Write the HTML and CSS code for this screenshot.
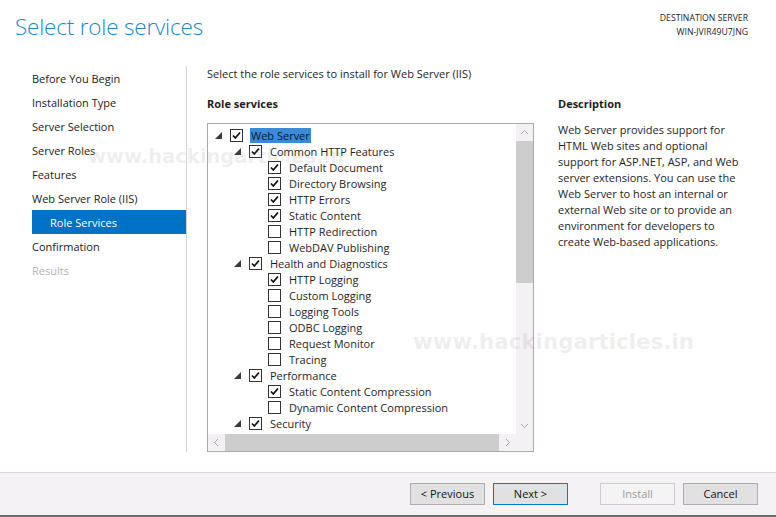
FILE: index.html
```html
<!DOCTYPE html>
<html>
<head>
<meta charset="utf-8">
<link rel="stylesheet" href="styles.css">
</head>
<body>
<svg class="defs" width="0" height="0">
  <symbol id="chk" viewBox="0 0 11 11"><polyline points="2,5.5 4.3,8 9,2.5" fill="none" stroke="#111" stroke-width="1.8"/></symbol>
  <symbol id="tri" viewBox="0 0 7 7"><polygon points="7,0 7,7 0,7" fill="#3a3a3a"/></symbol>
</svg>
<div class="app">
  <header class="header">
    <h1 class="title">Select role services</h1>
    <div class="dest">
      <div>DESTINATION SERVER</div>
      <div>WIN-JVIR49U7JNG</div>
    </div>
  </header>
  <main class="main">
    <nav class="nav">
      <div class="nav-item">Before You Begin</div>
      <div class="nav-item">Installation Type</div>
      <div class="nav-item">Server Selection</div>
      <div class="nav-item">Server Roles</div>
      <div class="nav-item">Features</div>
      <div class="nav-item">Web Server Role (IIS)</div>
      <div class="nav-item active">Role Services</div>
      <div class="nav-item">Confirmation</div>
      <div class="nav-item disabled">Results</div>
    </nav>
    <section class="content">
      <div class="intro">Select the role services to install for Web Server (IIS)</div>
      <div class="cols">
        <div class="tree-col">
          <div class="heading">Role services</div>
          <div class="tree">
            <div class="tree-view">
              <div class="row l0"><span class="exp"><svg><use href="#tri"/></svg></span><span class="cb on"><svg><use href="#chk"/></svg></span><span class="lbl sel">Web Server</span></div>
              <div class="row l1"><span class="exp"><svg><use href="#tri"/></svg></span><span class="cb on"><svg><use href="#chk"/></svg></span><span class="lbl">Common HTTP Features</span></div>
              <div class="row l2"><span class="exp"></span><span class="cb on"><svg><use href="#chk"/></svg></span><span class="lbl">Default Document</span></div>
              <div class="row l2"><span class="exp"></span><span class="cb on"><svg><use href="#chk"/></svg></span><span class="lbl">Directory Browsing</span></div>
              <div class="row l2"><span class="exp"></span><span class="cb on"><svg><use href="#chk"/></svg></span><span class="lbl">HTTP Errors</span></div>
              <div class="row l2"><span class="exp"></span><span class="cb on"><svg><use href="#chk"/></svg></span><span class="lbl">Static Content</span></div>
              <div class="row l2"><span class="exp"></span><span class="cb"></span><span class="lbl">HTTP Redirection</span></div>
              <div class="row l2"><span class="exp"></span><span class="cb"></span><span class="lbl">WebDAV Publishing</span></div>
              <div class="row l1"><span class="exp"><svg><use href="#tri"/></svg></span><span class="cb on"><svg><use href="#chk"/></svg></span><span class="lbl">Health and Diagnostics</span></div>
              <div class="row l2"><span class="exp"></span><span class="cb on"><svg><use href="#chk"/></svg></span><span class="lbl">HTTP Logging</span></div>
              <div class="row l2"><span class="exp"></span><span class="cb"></span><span class="lbl">Custom Logging</span></div>
              <div class="row l2"><span class="exp"></span><span class="cb"></span><span class="lbl">Logging Tools</span></div>
              <div class="row l2"><span class="exp"></span><span class="cb"></span><span class="lbl">ODBC Logging</span></div>
              <div class="row l2"><span class="exp"></span><span class="cb"></span><span class="lbl">Request Monitor</span></div>
              <div class="row l2"><span class="exp"></span><span class="cb"></span><span class="lbl">Tracing</span></div>
              <div class="row l1"><span class="exp"><svg><use href="#tri"/></svg></span><span class="cb on"><svg><use href="#chk"/></svg></span><span class="lbl">Performance</span></div>
              <div class="row l2"><span class="exp"></span><span class="cb on"><svg><use href="#chk"/></svg></span><span class="lbl">Static Content Compression</span></div>
              <div class="row l2"><span class="exp"></span><span class="cb"></span><span class="lbl">Dynamic Content Compression</span></div>
              <div class="row l1"><span class="exp"><svg><use href="#tri"/></svg></span><span class="cb on"><svg><use href="#chk"/></svg></span><span class="lbl">Security</span></div>
            </div>
            <div class="vscroll">
              <div class="sb-btn"><svg viewBox="0 0 17 17"><polyline points="5,10 8.5,6.5 12,10" fill="none" stroke="#a6a6a6" stroke-width="1"/></svg></div>
              <div class="vthumb"></div>
              <div class="vtrack"></div>
              <div class="sb-btn"><svg viewBox="0 0 17 17"><polyline points="5,7 8.5,10.5 12,7" fill="none" stroke="#a6a6a6" stroke-width="1"/></svg></div>
            </div>
            <div class="hscroll">
              <div class="sb-btn"><svg viewBox="0 0 17 17"><polyline points="10,5 6.5,8.5 10,12" fill="none" stroke="#a6a6a6" stroke-width="1"/></svg></div>
              <div class="hthumb"></div>
              <div class="sb-btn"><svg viewBox="0 0 17 17"><polyline points="7,5 10.5,8.5 7,12" fill="none" stroke="#a6a6a6" stroke-width="1"/></svg></div>
            </div>
            <div class="corner"></div>
          </div>
        </div>
        <div class="desc-col">
          <div class="heading">Description</div>
          <p class="desc">Web Server provides support for<br>HTML Web sites and optional<br>support for ASP.NET, ASP, and Web<br>server extensions. You can use the<br>Web Server to host an internal or<br>external Web site or to provide an<br>environment for developers to<br>create Web-based applications.</p>
        </div>
      </div>
    </section>
  </main>
  <footer class="footer">
    <button class="btn">&lt; Previous</button>
    <button class="btn primary">Next &gt;</button>
    <button class="btn disabled install">Install</button>
    <button class="btn">Cancel</button>
  </footer>
  <div class="wm wm1">www.hackingarticles.in</div>
  <div class="wm wm2">www.hackingarticles.in</div>
</div>
</body>
</html>
```

FILE: styles.css
```css
* { box-sizing: border-box; }
html, body { margin: 0; padding: 0; }
body {
  width: 776px;
  height: 517px;
  overflow: hidden;
  background: #fff;
  font-family: "Open Sans", "Noto Sans", sans-serif;
  font-size: 11px;
  color: #1e1e1e;
}
.defs { position: absolute; }
.app {
  position: relative;
  width: 776px;
  height: 517px;
  display: flex;
  flex-direction: column;
}
.header {
  height: 62px;
  display: flex;
  justify-content: space-between;
  align-items: flex-start;
  padding: 0 28px 0 15px;
}
.title {
  margin: 12px 0 0;
  font-family: "Open Sans", sans-serif;
  font-weight: 300;
  font-size: 22.5px;
  letter-spacing: -0.2px;
  line-height: 30px;
  color: #1d86c4;
}
.dest {
  margin-top: 12px;
  text-align: right;
  font-size: 8.7px;
  line-height: 13.5px;
  color: #1e1e1e;
}
.main {
  flex: 1;
  display: flex;
  min-height: 0;
}
.nav {
  width: 187px;
  margin: 4px 0 20px;
  padding-left: 32px;
  border-right: 1px solid #d4d4d4;
}
.nav-item {
  height: 24px;
  line-height: 26px;
  color: #222;
}
.nav-item.active {
  background: #0072c6;
  color: #fff;
  padding-left: 18px;
}
.nav-item.disabled { color: #b4b4b4; }
.content {
  padding: 3px 0 0 20px;
}
.intro { line-height: 17px; }
.cols {
  display: flex;
  gap: 24px;
  margin-top: 14px;
}
.heading {
  font-weight: 700;
  line-height: 16px;
}
.tree-col { width: 327px; }
.tree {
  margin-top: 11px;
  width: 327px;
  height: 329px;
  border: 1px solid #aaaaaa;
  display: grid;
  grid-template-columns: 1fr 17px;
  grid-template-rows: 1fr 17px;
}
.tree-view {
  overflow: hidden;
  padding-top: 3px;
}
.row {
  height: 16px;
  display: flex;
  align-items: center;
  white-space: nowrap;
}
.row.l0 { padding-left: 3px; }
.row.l1 { padding-left: 22px; }
.row.l2 { padding-left: 41px; }
.exp {
  width: 19px;
  height: 16px;
  display: flex;
  align-items: center;
  padding-left: 4px;
  flex: none;
}
.exp svg { width: 7px; height: 7px; }
.cb {
  width: 13px;
  height: 13px;
  border: 1px solid #333;
  background: #fff;
  flex: none;
  display: flex;
}
.cb svg { width: 11px; height: 11px; }
.lbl {
  margin-left: 7px;
  padding: 0 1px;
  line-height: 15px;
}
.lbl.sel {
  background: #3b8ad8;
  color: #0b1530;
}
.vscroll {
  display: flex;
  flex-direction: column;
  background: #f4f1f4;
}
.sb-btn { width: 17px; height: 17px; flex: none; }
.sb-btn svg { width: 17px; height: 17px; display: block; }
.vthumb { height: 142px; background: #cdcdcd; flex: none; }
.vtrack { flex: 1; }
.hscroll {
  display: flex;
  background: #f4f1f4;
}
.hthumb { flex: 1; background: #cdcdcd; }
.corner { background: #f4f1f4; }
.desc-col { width: 200px; }
.desc {
  margin: 10px 0 0;
  line-height: 16px;
}
.footer {
  height: 45px;
  border-top: 1px solid #d9d9d9;
  border-bottom: 2px solid #6b6b6b;
  background: #f5f2f5;
  display: flex;
  align-items: flex-start;
  justify-content: flex-end;
  padding: 10px 18px 0 0;
  gap: 8px;
}
.btn {
  width: 75px;
  height: 22px;
  border: 1px solid #adadad;
  background: #e1e1e1;
  font-family: "Open Sans", sans-serif;
  font-size: 11px;
  color: #111;
  padding: 0;
  line-height: 20px;
}
.btn.primary { border-color: #0078d7; }
.btn.disabled {
  border-color: #cccccc;
  background: #f4f4f4;
  color: #9a9a9a;
}
.btn.install { margin-left: 24px; }
.wm {
  position: absolute;
  font-family: "DejaVu Sans", sans-serif;
  font-weight: 700;
  color: rgba(120, 120, 120, 0.12);
  pointer-events: none;
  white-space: nowrap;
}
.wm1 { left: 88px; top: 145px; font-size: 19.5px; }
.wm2 { left: 413px; top: 329px; font-size: 21.4px; }
```
